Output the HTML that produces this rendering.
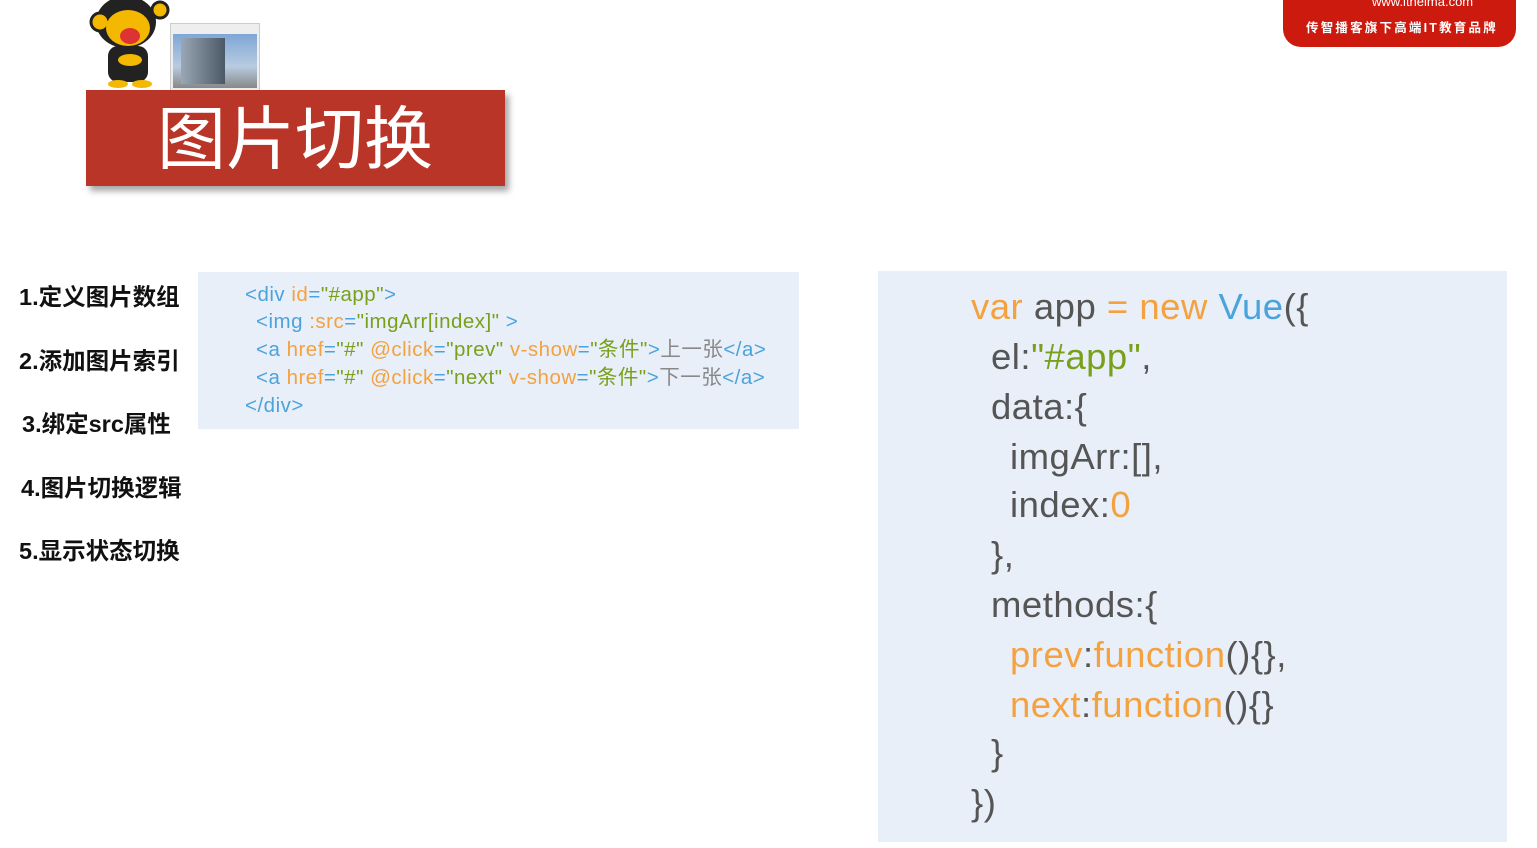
<!DOCTYPE html>
<html><head><meta charset="utf-8"><style>
body{margin:0;width:1537px;height:848px;background:#fff;position:relative;overflow:hidden;font-family:"Liberation Sans","Noto Sans CJK SC",sans-serif;}
.abs{position:absolute;}
.b{color:#4ba3dc}.o{color:#f3a23f}.g{color:#78a01a}.k{color:#555}
.list div{position:absolute;left:19px;font-weight:bold;font-size:23.5px;color:#111;white-space:nowrap;}
.lc div{position:absolute;font-size:20.5px;letter-spacing:0.5px;white-space:nowrap;line-height:28px;}
.rc div{position:absolute;font-size:36.5px;letter-spacing:0.5px;white-space:nowrap;line-height:50px;color:#555;}
</style></head><body>
<svg class="abs" style="left:88px;top:0" width="84" height="90" viewBox="0 0 84 90">
<ellipse cx="38" cy="22" rx="30" ry="26" fill="#222"/>
<circle cx="12" cy="22" r="9" fill="#f5b800" stroke="#222" stroke-width="3"/>
<ellipse cx="40" cy="28" rx="22" ry="18" fill="#f5b800"/>
<ellipse cx="42" cy="36" rx="10" ry="8" fill="#d33"/>
<rect x="20" y="46" width="40" height="36" rx="10" fill="#222"/>
<ellipse cx="42" cy="60" rx="12" ry="6" fill="#f5b800"/>
<circle cx="72" cy="10" r="8" fill="#f5b800" stroke="#222" stroke-width="3"/>
<ellipse cx="30" cy="84" rx="10" ry="4" fill="#f5b800"/><ellipse cx="54" cy="84" rx="10" ry="4" fill="#f5b800"/>
</svg>
<div class="abs" style="left:170px;top:23px;width:88px;height:66px;background:#eee;border:1px solid #ccc;">
<div class="abs" style="left:2px;top:10px;width:84px;height:54px;background:linear-gradient(#7ea6d6,#b8cbe0 60%,#888 100%);"></div>
<div class="abs" style="left:10px;top:14px;width:44px;height:46px;background:linear-gradient(90deg,#9aa7b4,#4b5966);"></div>
</div>
<div class="abs" style="left:86px;top:90px;width:419px;height:96px;background:#b83527;box-shadow:4px 5px 6px rgba(0,0,0,.35);"></div>
<div class="abs" style="left:157px;top:96px;font-size:69px;color:#fff;line-height:88px;letter-spacing:0px;">图片切换</div>
<div class="abs" style="left:1283px;top:-20px;width:233px;height:67px;background:#cc1a0e;border-radius:0 0 18px 18px;"></div>
<div class="abs" style="left:1372px;top:-6px;font-size:13px;color:#fff;">www.itheima.com</div>
<div class="abs" style="left:1306px;top:17px;font-size:12.5px;color:#fff;letter-spacing:2.2px;font-weight:bold;">传智播客旗下高端IT教育品牌</div>
<div class="list">
<div style="top:278px">1.定义图片数组</div>
<div style="top:342px">2.添加图片索引</div>
<div style="top:405px;left:22px">3.绑定src属性</div>
<div style="top:469px;left:21px">4.图片切换逻辑</div>
<div style="top:532px">5.显示状态切换</div>
</div>
<div class="abs" style="left:198px;top:272px;width:601px;height:157px;background:#e9eff9;"></div>
<div class="lc">
<div style="left:245px;top:281px"><span class="b">&lt;div </span><span class="o">id</span><span class="b">=</span><span class="g">"#app"</span><span class="b">&gt;</span></div>
<div style="left:256px;top:308px"><span class="b">&lt;img </span><span class="o">:src</span><span class="b">=</span><span class="g">"imgArr[index]"</span><span class="b"> &gt;</span></div>
<div style="left:256px;top:336px"><span class="b">&lt;a </span><span class="o">href</span><span class="b">=</span><span class="g">"#"</span> <span class="o">@click</span><span class="b">=</span><span class="g">"prev"</span> <span class="o">v-show</span><span class="b">=</span><span class="g">"条件"</span><span class="b">&gt;</span><span style="color:#888">上一张</span><span class="b">&lt;/a&gt;</span></div>
<div style="left:256px;top:364px"><span class="b">&lt;a </span><span class="o">href</span><span class="b">=</span><span class="g">"#"</span> <span class="o">@click</span><span class="b">=</span><span class="g">"next"</span> <span class="o">v-show</span><span class="b">=</span><span class="g">"条件"</span><span class="b">&gt;</span><span style="color:#888">下一张</span><span class="b">&lt;/a&gt;</span></div>
<div style="left:245px;top:392px"><span class="b">&lt;/div&gt;</span></div>
</div>
<div class="abs" style="left:878px;top:271px;width:629px;height:571px;background:#e9eff9;"></div>
<div class="rc">
<div style="left:971px;top:282px"><span class="o">var</span> app <span class="o">= new</span> <span class="b">Vue</span>({</div>
<div style="left:991px;top:332px">el:<span class="g">"#app"</span>,</div>
<div style="left:991px;top:382px">data:{</div>
<div style="left:1010px;top:432px">imgArr:[],</div>
<div style="left:1010px;top:480px">index:<span class="o">0</span></div>
<div style="left:991px;top:530px">},</div>
<div style="left:991px;top:580px">methods:{</div>
<div style="left:1010px;top:630px"><span class="o">prev</span>:<span class="o">function</span>(){},</div>
<div style="left:1010px;top:680px"><span class="o">next</span>:<span class="o">function</span>(){}</div>
<div style="left:991px;top:728px">}</div>
<div style="left:971px;top:778px">})</div>
</div>
</body></html>
